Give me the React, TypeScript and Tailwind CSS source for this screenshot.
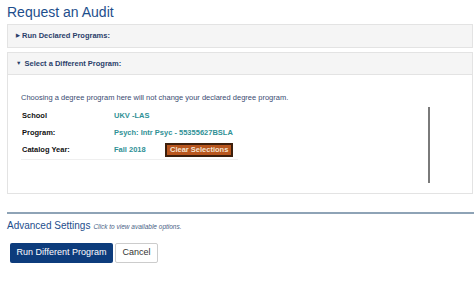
export default function App() {
  return (
    <div className="w-[474px] h-[283px] bg-white overflow-hidden font-['Liberation_Sans',Arial,sans-serif]">
      <h1 className="pl-[7px] pt-[3px] text-[14px] leading-[18px] text-[#1d4e8c]">Request an Audit</h1>
      <div className="ml-[7px] mr-[1px] mt-[3px]">
        <div className="h-[24px] border border-[#e3e3e3] bg-[#f5f5f5] flex items-center pl-[8px] text-[7.5px] font-bold text-[#2a3e6a]">
          <span className="text-[5px] mr-[2px]">▶</span>
          <span>Run Declared Programs:</span>
        </div>
        <div className="mt-[4px] border border-[#e3e3e3]">
          <div className="h-[22px] bg-[#f5f5f5] border-b border-[#e3e3e3] flex items-center pl-[8px] text-[7.5px] font-bold text-[#2a3e6a]">
            <span className="text-[5.5px] mr-[3px]">▼</span>
            <span>Select a Different Program:</span>
          </div>
          <div className="h-[118px] bg-white pl-[13px] pt-[18px]">
            <p className="text-[7.5px] leading-[10px] text-[#3a4b72]">
              Choosing a degree program here will not change your declared degree program.
            </p>
            <div className="mt-[4px] w-[409px] h-[76px] border-r-2 border-[#7a7a7a]">
              <div className="w-[217px] border-b border-[#efefef] text-[7.5px] font-bold">
                <div className="flex h-[17px] items-center">
                  <span className="w-[93px] pl-[1px] text-[#111]">School</span>
                  <span className="text-[#2f9196]">UKV -LAS</span>
                </div>
                <div className="flex h-[17px] items-center">
                  <span className="w-[93px] pl-[1px] text-[#111]">Program:</span>
                  <span className="text-[#2f9196]">Psych: Intr Psyc - 55355627BSLA</span>
                </div>
                <div className="flex h-[18px] items-center">
                  <span className="w-[93px] pl-[1px] text-[#111]">Catalog Year:</span>
                  <span className="w-[51px] text-[#2f9196]">Fall 2018</span>
                  <span className="h-[14px] px-[3px] flex items-center bg-[#b8561e] border-2 border-[#3d1f0c] text-[#f3e3d3]">Clear Selections</span>
                </div>
              </div>
            </div>
          </div>
        </div>
      </div>
      <div className="ml-[7px] mt-[18px] border-t-2 border-[#8ea3b6]"></div>
      <div className="pl-[7px] mt-[5px] flex items-baseline">
        <span className="text-[10px] leading-[14px] text-[#1d4e8c]">Advanced Settings</span>
        <span className="ml-[3px] text-[6.5px] italic text-[#4a5f86]">Click to view available options.</span>
      </div>
      <div className="pl-[10px] mt-[10px] flex gap-[2px]">
        <button className="h-[20px] w-[103px] bg-[#0d3c7c] rounded-[2px] text-white text-[9px]">Run Different Program</button>
        <button className="h-[20px] w-[43px] bg-white border border-[#cccccc] rounded-[2px] text-[#333] text-[9px]">Cancel</button>
      </div>
    </div>
  );
}
